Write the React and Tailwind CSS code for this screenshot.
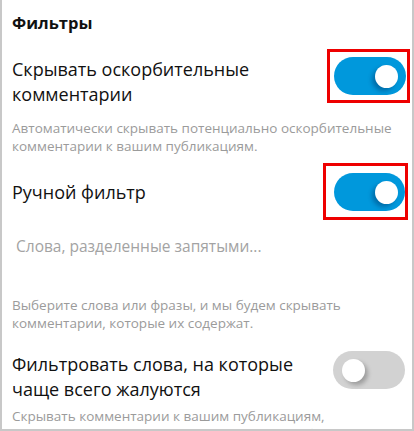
const Toggle = ({ on }) => (
  <div
    className={
      "relative w-[72px] h-[38px] rounded-full " +
      (on ? "bg-[#0098dc]" : "bg-[#d2d2d2]")
    }
  >
    <div
      className={
        "absolute top-[8px] w-[23px] h-[23px] rounded-full bg-white " +
        (on
          ? "left-[41px] shadow-[-3px_3px_4px_rgba(0,60,110,0.45)]"
          : "left-[9px] shadow-[3px_3px_4px_rgba(0,0,0,0.25)]")
      }
    />
  </div>
);

const Desc = ({ children, className = "" }) => (
  <p
    className={
      "pl-[10px] whitespace-nowrap text-[13.5px] leading-[18px] text-[#9b9b9b] " +
      className
    }
  >
    {children}
  </p>
);

export default function App() {
  return (
    <div
      className="w-[414px] h-[431px] overflow-hidden bg-white border-l-2 border-r-2 border-b-2 border-[#c8c8c8]"
      style={{ fontFamily: '"Open Sans", "Noto Sans", sans-serif' }}
    >
      <div className="h-[44px] flex items-center px-[10px] pt-[2px]">
        <h2 className="text-[16.5px] font-bold text-[#111]">Фильтры</h2>
      </div>

      <div className="flex justify-between items-start">
        <div className="pl-[10px] pt-[13px] text-[18px] leading-[25px] text-[#111]">
          Скрывать оскорбительные
          <br />
          комментарии
        </div>
        <div className="mt-[5px] mr-[2px] w-[83px] h-[54px] border-[3px] border-[#ee0000] flex items-center pl-[4px]">
          <Toggle on />
        </div>
      </div>

      <Desc className="mt-[12px]">
        Автоматически скрывать потенциально оскорбительные
        <br />
        комментарии к вашим публикациям.
      </Desc>

      <div className="flex justify-between items-center mt-[8px]">
        <div className="pl-[10px] text-[18px] leading-[25px] text-[#111] pt-[2px]">
          Ручной фильтр
        </div>
        <div className="mr-[4px] w-[85px] h-[57px] border-[3px] border-[#ee0000] flex items-center pl-[8px]">
          <Toggle on />
        </div>
      </div>

      <div className="mt-[16px] pl-[14px] text-[15.5px] leading-[20px] text-[#a3a3a3]">
        Слова, разделенные запятыми...
      </div>

      <Desc className="mt-[40px]">
        Выберите слова или фразы, и мы будем скрывать
        <br />
        комментарии, которые их содержат.
      </Desc>

      <div className="flex justify-between items-start mt-[20px]">
        <div className="pl-[10px] text-[18px] leading-[25px] text-[#111]">
          Фильтровать слова, на которые
          <br />
          чаще всего жалуются
        </div>
        <div className="mt-[-1px] mr-[7px]">
          <Toggle />
        </div>
      </div>

      <Desc className="mt-[5px]">
        Скрывать комментарии к вашим публикациям,
        <br />
        содержащие слова и фразы, на которые наиболее часто
      </Desc>
    </div>
  );
}
